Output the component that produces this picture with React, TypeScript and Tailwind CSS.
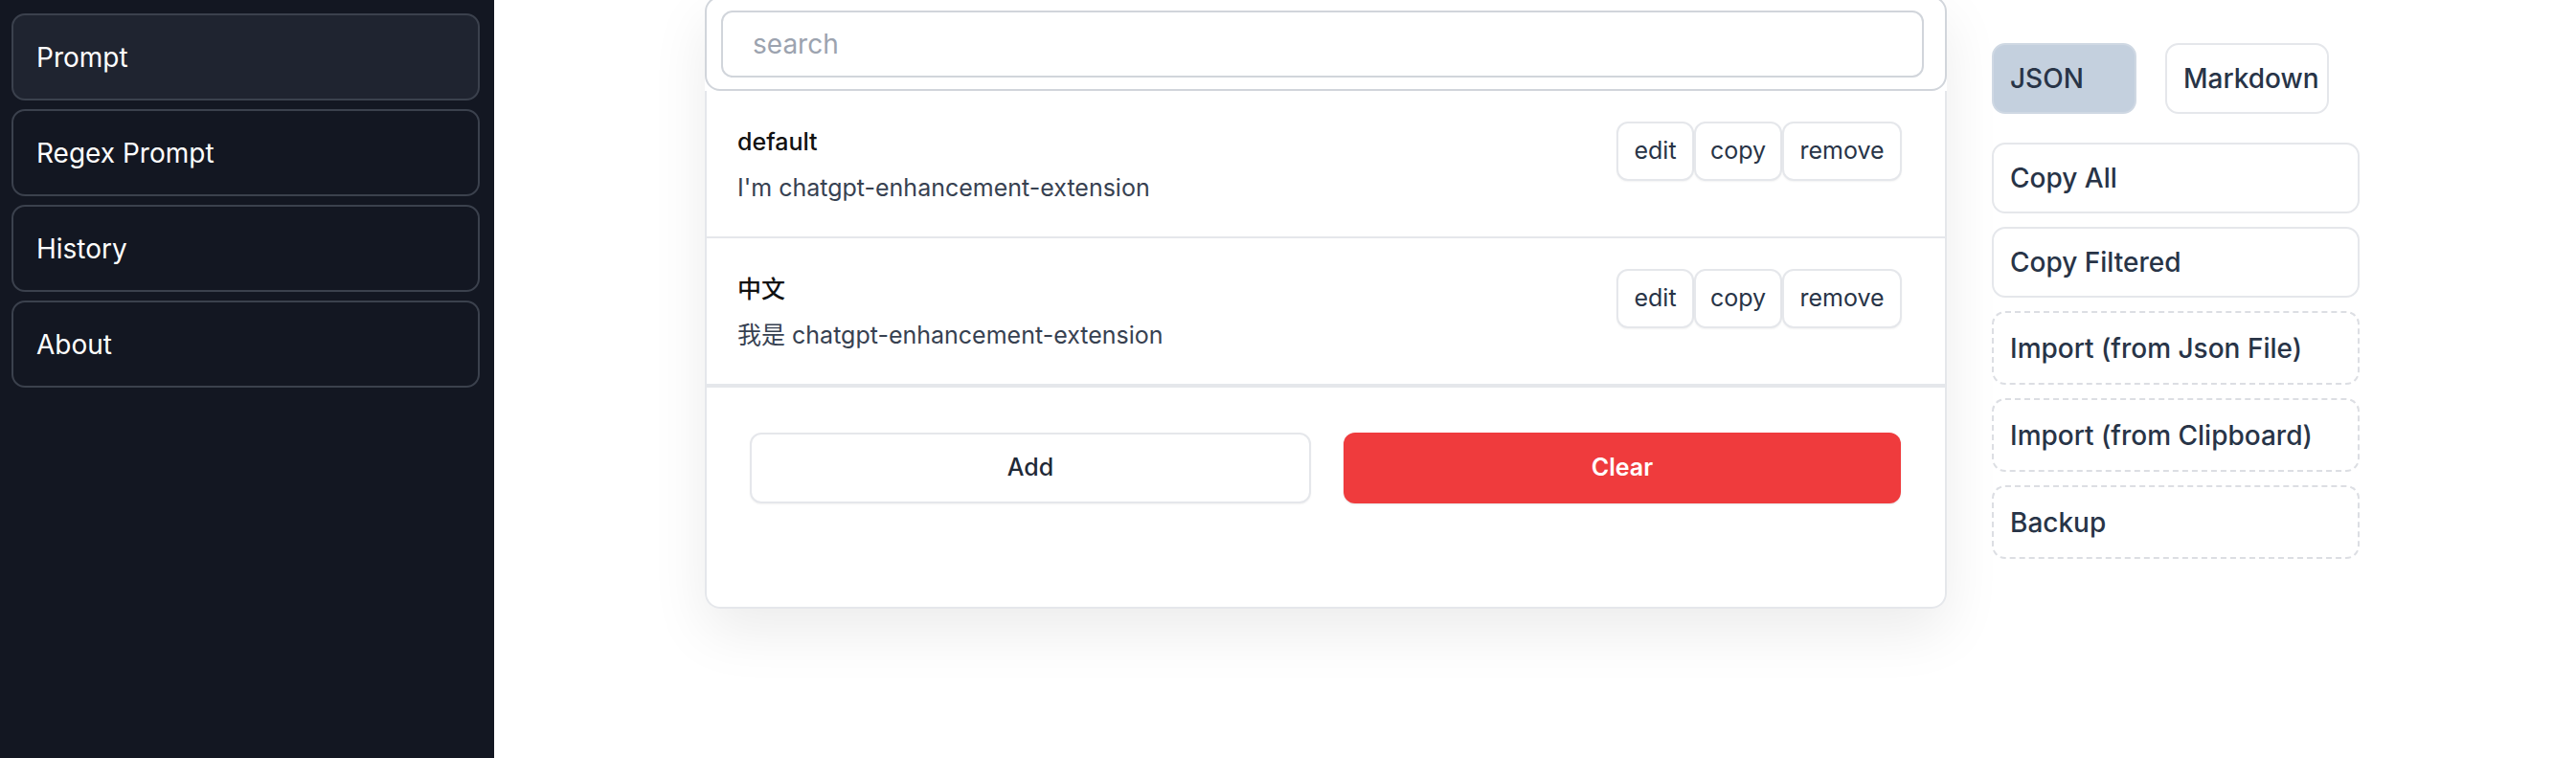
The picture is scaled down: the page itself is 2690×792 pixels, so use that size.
import React from "react";

const font = { fontFamily: "Inter, 'Noto Sans CJK SC', sans-serif" };

function SideItem({ label, active }: { label: string; active?: boolean }) {
  return (
    <div
      className={`h-[91px] rounded-[14px] border-2 border-[#3b414d] flex items-center pl-[24px] text-[28px] text-white ${
        active ? "bg-[#1f2430]" : "bg-[#131722]"
      }`}
    >
      {label}
    </div>
  );
}

function ActionBtn({ label, w }: { label: string; w: string }) {
  return (
    <div
      className={`${w} h-[62px] flex items-center justify-center rounded-[12px] border-2 border-[#e5e7eb] bg-white text-[25px] text-[#283447] shadow-[0_1px_2px_rgba(0,0,0,0.05)]`}
    >
      {label}
    </div>
  );
}

function Row({ title, desc, last }: { title: string; desc: string; last?: boolean }) {
  return (
    <div
      className={`flex justify-between items-start pl-[32px] pr-[45px] pt-[32px] h-[154px] ${
        last ? "" : "border-b-2 border-[#e5e7eb]"
      }`}
    >
      <div className="flex flex-col pt-[4px]">
        <div className="text-[25px] leading-[35px] font-medium text-[#111111]">{title}</div>
        <div className="text-[25px] leading-[35px] mt-[13px] text-[#374151]">{desc}</div>
      </div>
      <div className="flex">
        <ActionBtn label="edit" w="w-[81px]" />
        <ActionBtn label="copy" w="w-[92px]" />
        <ActionBtn label="remove" w="w-[125px]" />
      </div>
    </div>
  );
}

function SideBtn({ label, dashed }: { label: string; dashed?: boolean }) {
  return (
    <div
      className={`w-[384px] ${
        dashed ? "h-[77px] border-dashed border-[#dcdee3]" : "h-[74px] border-[#e5e7eb]"
      } border-2 rounded-[14px] bg-white flex items-center pl-[17px] text-[28px] font-medium text-[#283447]`}
    >
      {label}
    </div>
  );
}

export default function App() {
  return (
    <div className="w-full h-[792px] flex bg-white overflow-hidden" style={font}>
      <div className="w-[516px] shrink-0 bg-[#131722] pl-[12px] pr-[15px] pt-[14px] flex flex-col gap-[9px]">
        <SideItem label="Prompt" active />
        <SideItem label="Regex Prompt" />
        <SideItem label="History" />
        <SideItem label="About" />
      </div>
      <div className="flex items-start">
        <div className="ml-[220px] -mt-[4px] w-[1297px] flex flex-col rounded-[16px] shadow-[0_24px_60px_rgba(0,0,0,0.08)] bg-white">
          <div className="h-[99px] border-2 border-[#d1d5db] rounded-[16px] pl-[15px] pr-[22px] pt-[13px] bg-white">
            <div className="h-[70px] border-2 border-[#d1d5db] rounded-[12px] flex items-center pl-[31px] text-[28px] text-[#9ca3af]">
              search
            </div>
          </div>
          <div className="border-x-2 border-b-2 border-[#e5e7eb] rounded-b-[16px]">
            <Row title="default" desc="I'm chatgpt-enhancement-extension" />
            <Row title="中文" desc="我是 chatgpt-enhancement-extension" />
            <div className="border-t-2 border-[#e5e7eb] flex gap-[34px] pl-[45px] pr-[46px] pt-[47px] h-[231px]">
              <div className="flex-1 h-[74px] rounded-[12px] border-2 border-[#e5e7eb] bg-white flex items-center justify-center text-[25px] font-medium text-[#1f2937] shadow-[0_1px_2px_rgba(0,0,0,0.05)]">
                Add
              </div>
              <div className="flex-1 h-[74px] rounded-[12px] bg-[#ef3b3d] flex items-center justify-center text-[25px] font-semibold text-white shadow-[0_1px_2px_rgba(0,0,0,0.1)]">
                Clear
              </div>
            </div>
          </div>
        </div>
        <div className="ml-[47px] mt-[45px] flex flex-col">
          <div className="flex gap-[30px]">
            <div className="w-[151px] h-[74px] rounded-[14px] bg-[#c4d0de] border-2 border-[#cfd8e3] flex items-center pl-[17px] text-[28px] font-medium text-[#283447]">
              JSON
            </div>
            <div className="w-[171px] h-[74px] rounded-[14px] bg-white border-2 border-[#e5e7eb] flex items-center pl-[17px] text-[28px] font-medium text-[#283447]">
              Markdown
            </div>
          </div>
          <div className="mt-[30px] flex flex-col gap-[14px]">
            <SideBtn label="Copy All" />
            <SideBtn label="Copy Filtered" />
            <SideBtn label="Import (from Json File)" dashed />
            <SideBtn label="Import (from Clipboard)" dashed />
            <SideBtn label="Backup" dashed />
          </div>
        </div>
      </div>
    </div>
  );
}
